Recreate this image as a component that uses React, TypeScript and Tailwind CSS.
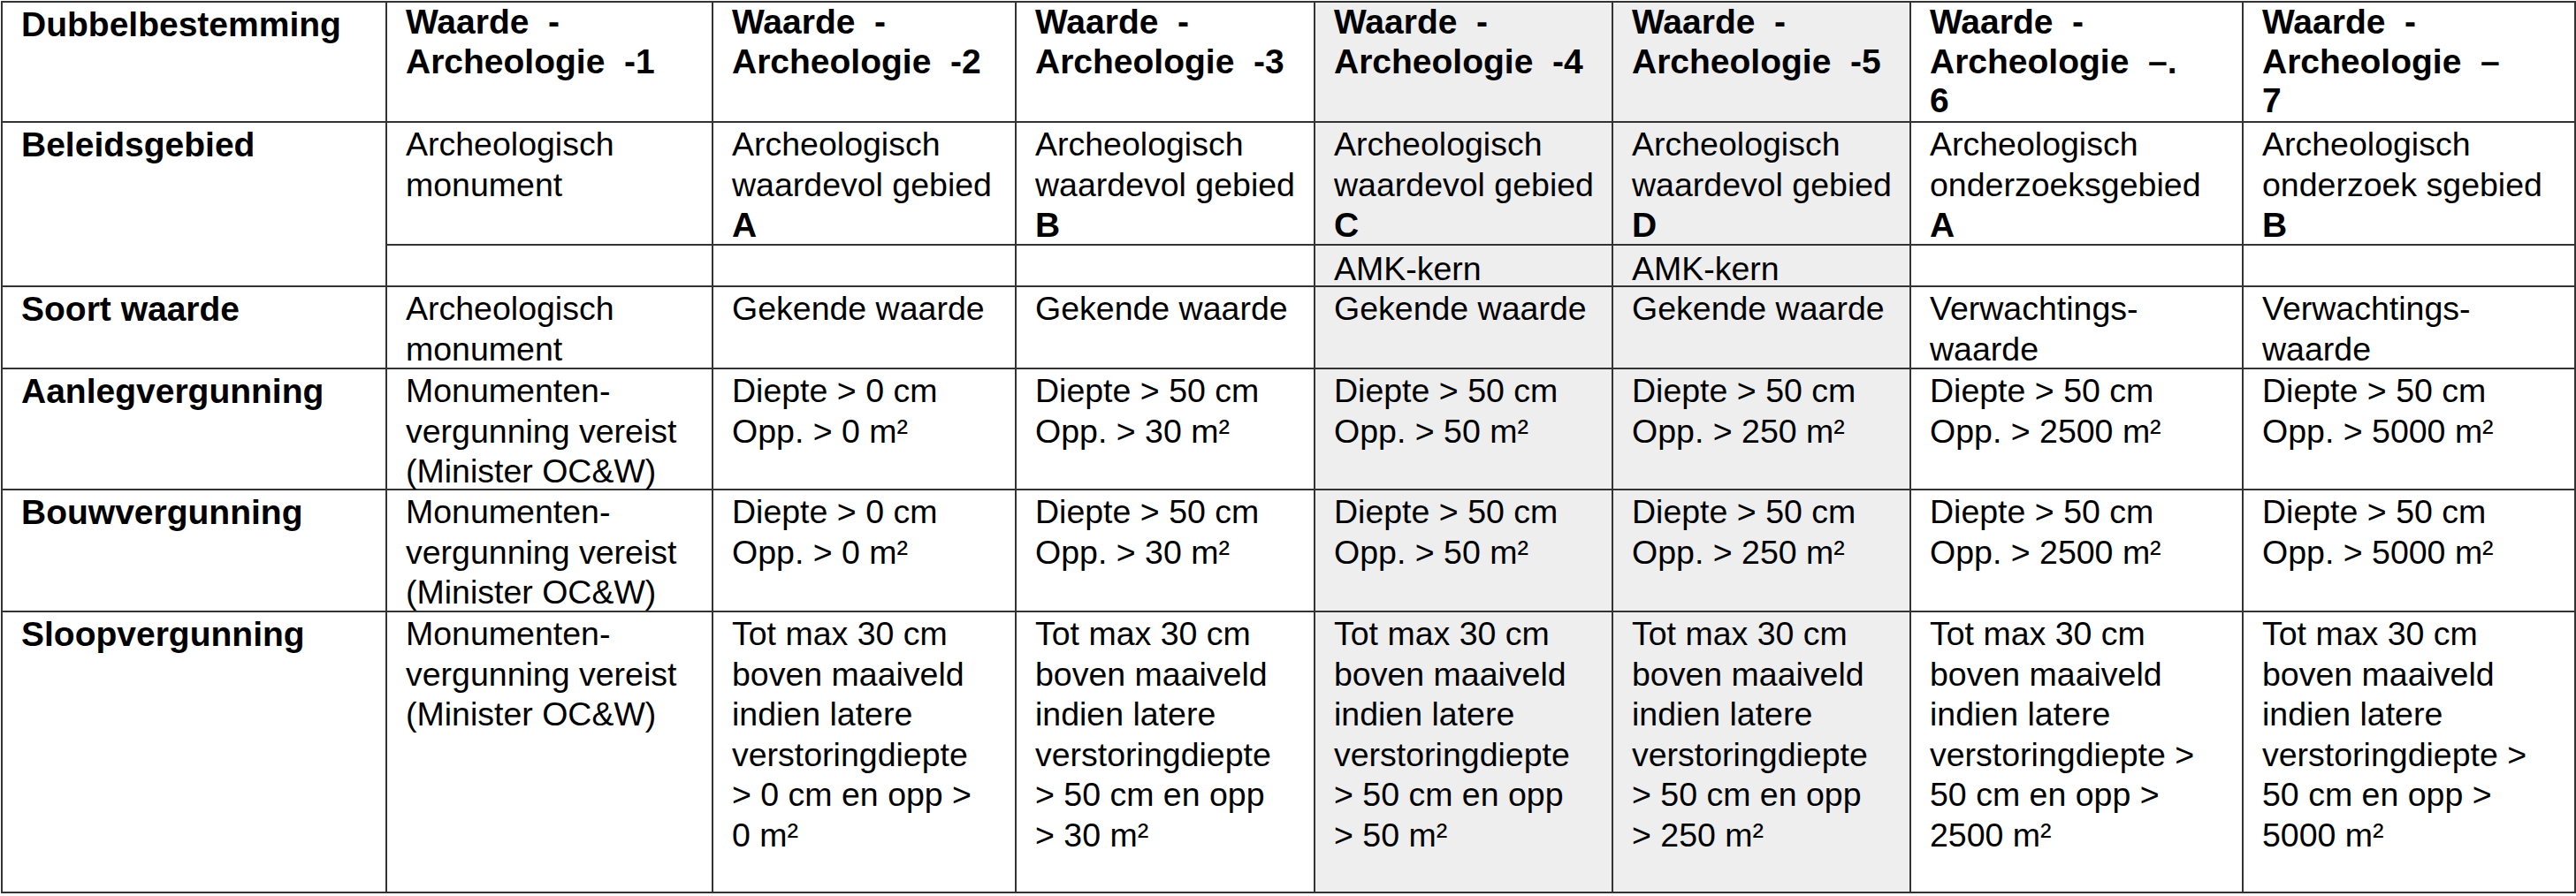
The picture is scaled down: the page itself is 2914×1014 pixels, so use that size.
// Archeologie-tabel: dubbelbestemmingen Waarde - Archeologie 1 t/m 7.
// Regels zijn vast gebroken zoals in het bronbestand (PDF), dus elke cel
// krijgt een lijst met regels in plaats van vrije tekstomloop.

type Line = string | { bold: string }

interface Row {
  label?: string
  tall?: boolean
  cells: Line[][]
}

// kolommen 4 en 5 hebben een grijze achtergrond
const shaded = [false, false, false, true, true, false, false]

const header: string[][] = [
  ['Waarde  -', 'Archeologie  -1'],
  ['Waarde  -', 'Archeologie  -2'],
  ['Waarde  -', 'Archeologie  -3'],
  ['Waarde  -', 'Archeologie  -4'],
  ['Waarde  -', 'Archeologie  -5'],
  ['Waarde  -', 'Archeologie  –.', '6'],
  ['Waarde  -', 'Archeologie  –', '7'],
]

const monument: Line[] = ['Monumenten-', 'vergunning vereist', '(Minister OC&W)']

const vergunning: Line[][] = [
  monument,
  ['Diepte > 0 cm', 'Opp. > 0 m²'],
  ['Diepte > 50 cm', 'Opp. > 30 m²'],
  ['Diepte > 50 cm', 'Opp. > 50 m²'],
  ['Diepte > 50 cm', 'Opp. > 250 m²'],
  ['Diepte > 50 cm', 'Opp. > 2500 m²'],
  ['Diepte > 50 cm', 'Opp. > 5000 m²'],
]

const sloopBase = ['Tot max 30 cm', 'boven maaiveld', 'indien latere']

const rows: Row[] = [
  {
    label: 'Beleidsgebied',
    tall: true,
    cells: [
      ['Archeologisch', 'monument'],
      ['Archeologisch', 'waardevol gebied', { bold: 'A' }],
      ['Archeologisch', 'waardevol gebied', { bold: 'B' }],
      ['Archeologisch', 'waardevol gebied', { bold: 'C' }],
      ['Archeologisch', 'waardevol gebied', { bold: 'D' }],
      ['Archeologisch', 'onderzoeksgebied', { bold: 'A' }],
      ['Archeologisch', 'onderzoek sgebied', { bold: 'B' }],
    ],
  },
  {
    cells: [[], [], [], ['AMK-kern'], ['AMK-kern'], [], []],
  },
  {
    label: 'Soort waarde',
    cells: [
      ['Archeologisch', 'monument'],
      ['Gekende waarde'],
      ['Gekende waarde'],
      ['Gekende waarde'],
      ['Gekende waarde'],
      ['Verwachtings-', 'waarde'],
      ['Verwachtings-', 'waarde'],
    ],
  },
  { label: 'Aanlegvergunning', cells: vergunning },
  { label: 'Bouwvergunning', cells: vergunning },
  {
    label: 'Sloopvergunning',
    cells: [
      monument,
      [...sloopBase, 'verstoringdiepte', '> 0 cm en opp >', '0 m²'],
      [...sloopBase, 'verstoringdiepte', '> 50 cm en opp', '> 30 m²'],
      [...sloopBase, 'verstoringdiepte', '> 50 cm en opp', '> 50 m²'],
      [...sloopBase, 'verstoringdiepte', '> 50 cm en opp', '> 250 m²'],
      [...sloopBase, 'verstoringdiepte >', '50 cm en opp >', '2500 m²'],
      [...sloopBase, 'verstoringdiepte >', '50 cm en opp >', '5000 m²'],
    ],
  },
]

function Lines({ lines }: { lines: Line[] }) {
  return (
    <>
      {lines.map((line, i) =>
        typeof line === 'string' ? (
          <div key={i}>{line}</div>
        ) : (
          <div key={i} className="font-bold text-[39px]">{line.bold}</div>
        )
      )}
    </>
  )
}

const cellBase = 'pl-[21px] whitespace-pre'
const bg = (i: number) => (shaded[i] ? 'bg-[#eeeeee]' : 'bg-white')

export default function App() {
  return (
    <div className="min-h-screen bg-white pt-px pl-px">
      <div className="grid w-fit grid-cols-[433px_367px_341px_336px_335px_335px_374px_374px] grid-rows-[134px_137px_45px_91px_135px_136px_316px] gap-[2px] bg-[#333333] p-[2px] font-['Liberation_Sans',Arial,sans-serif] text-[37.5px] leading-[45.5px] text-black">
        {/* kopregel */}
        <div className={`${cellBase} bg-white pt-[2px] font-bold text-[39px]`}>Dubbelbestemming</div>
        {header.map((lines, i) => (
          <div key={i} className={`${cellBase} ${bg(i)} font-bold text-[39px] leading-[44.5px]`}>
            {lines.map((l, j) => (
              <div key={j}>{l}</div>
            ))}
          </div>
        ))}

        {rows.map((row, r) => (
          <div key={r} className="contents">
            {row.label && (
              <div className={`${cellBase} bg-white pt-[2px] font-bold text-[39px] ${row.tall ? 'row-span-2' : ''}`}>
                {row.label}
              </div>
            )}
            {row.cells.map((lines, i) => (
              <div
                key={i}
                className={`${cellBase} ${bg(i)} ${row.label ? 'pt-[2px]' : 'pt-[7px] leading-[38px]'}`}
              >
                <Lines lines={lines} />
              </div>
            ))}
          </div>
        ))}
      </div>
    </div>
  )
}
